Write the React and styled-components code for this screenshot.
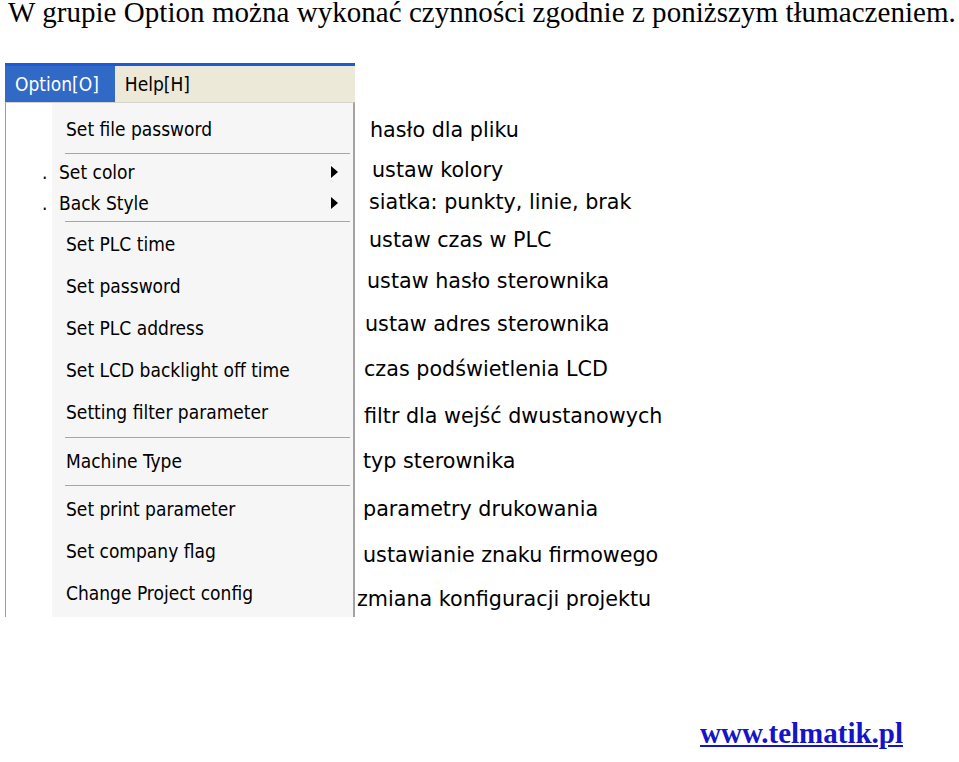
import React from "react";
import styled, { createGlobalStyle } from "styled-components";

const GlobalStyle = createGlobalStyle`
  html, body { margin: 0; padding: 0; background: #ffffff; }
  #root { width: 959px; }
`;

const Page = styled.div`
  width: 959px;
  height: 762px;
  display: flex;
  flex-direction: column;
  overflow: hidden;
  background: #ffffff;
`;

const Title = styled.h1`
  margin: 0;
  padding-left: 8px;
  font-family: "Liberation Serif", "Times New Roman", serif;
  font-weight: normal;
  font-size: 29px;
  line-height: 24px;
  letter-spacing: 0.04px;
  color: #000;
  white-space: nowrap;
`;

const Content = styled.div`
  display: flex;
  align-items: flex-start;
  margin-top: 39px;
  padding-left: 5px;
`;

const Menu = styled.div`
  width: 350px;
  display: flex;
  flex-direction: column;
  font-family: "DejaVu Sans Condensed", "DejaVu Sans", sans-serif;
  font-stretch: condensed;
  font-size: 19px;
  color: #000;
`;

const TopLine = styled.div`
  height: 3px;
  background: #1d5bd6;
`;

const MenuBar = styled.div`
  height: 36px;
  display: flex;
  align-items: stretch;
  background: #ece9d8;
`;

const MenuTitle = styled.div`
  display: flex;
  align-items: center;
  padding: 0 ${(p) => (p.$active ? 16 : 12)}px 0 10px;
  background: ${(p) => (p.$active ? "#3169c6" : "transparent")};
  color: ${(p) => (p.$active ? "#ffffff" : "#000")};
`;

const Panel = styled.div`
  display: flex;
  flex-direction: column;
  padding: 5px 0 3px;
  border-top: 1px solid #d6d3ca;
  border-left: 1px solid #9c9c9c;
  border-right: 2px solid #a3a3a3;
  background: linear-gradient(to right, #ffffff 46px, #f6f6f6 46px);
`;

const Item = styled.div`
  position: relative;
  height: ${(p) => (p.$sub ? 31 : 42)}px;
  display: flex;
  align-items: center;
  padding-left: ${(p) => (p.$sub ? 53 : 60)}px;
  white-space: nowrap;
`;

const Dot = styled.span`
  position: absolute;
  left: 36px;
`;

const Arrow = styled.svg`
  position: absolute;
  right: 14px;
  top: 50%;
  margin-top: -6px;
`;

const Separator = styled.div`
  padding: ${(p) => p.$above}px 3px ${(p) => p.$below}px 59px;
  &::after {
    content: "";
    display: block;
    height: 1px;
    background: #a9a69e;
  }
`;

const Translations = styled.ul`
  list-style: none;
  margin: 0;
  padding: 0;
  display: flex;
  flex-direction: column;
  font-family: "DejaVu Sans", sans-serif;
  font-size: 20.7px;
  line-height: 24px;
  color: #000;
`;

const Translation = styled.li`
  margin-top: ${(p) => p.$top}px;
  margin-left: ${(p) => p.$indent}px;
  white-space: nowrap;
`;

const Footer = styled.div`
  display: flex;
  justify-content: flex-end;
  margin-top: 104px;
  padding-right: 56px;
`;

const SiteLink = styled.a`
  font-family: "Liberation Serif", "Times New Roman", serif;
  font-weight: bold;
  font-size: 29px;
  line-height: 24px;
  color: #1414c8;
  text-decoration: underline;
`;

const SubArrow = () => (
  <Arrow width="8" height="12" viewBox="0 0 8 12">
    <path d="M0 0 L7 6 L0 12 Z" fill="#000" />
  </Arrow>
);

const translations = [
  { text: "hasło dla pliku", top: 55, indent: 15 },
  { text: "ustaw kolory", top: 16, indent: 17 },
  { text: "siatka: punkty, linie, brak", top: 8, indent: 14 },
  { text: "ustaw czas w PLC", top: 14, indent: 14 },
  { text: "ustaw hasło sterownika", top: 17, indent: 12 },
  { text: "ustaw adres sterownika", top: 19, indent: 10 },
  { text: "czas podświetlenia LCD", top: 21, indent: 9 },
  { text: "filtr dla wejść dwustanowych", top: 23, indent: 9 },
  { text: "typ sterownika", top: 21, indent: 8 },
  { text: "parametry drukowania", top: 24, indent: 8 },
  { text: "ustawianie znaku firmowego", top: 22, indent: 8 },
  { text: "zmiana konfiguracji projektu", top: 20, indent: 2 },
];

export default function App() {
  return (
    <Page>
      <GlobalStyle />
      <Title>
        W grupie Option można wykonać czynności zgodnie z poniższym
        tłumaczeniem.
      </Title>
      <Content>
        <Menu>
          <TopLine />
          <MenuBar>
            <MenuTitle $active>Option[O]</MenuTitle>
            <MenuTitle>Help[H]</MenuTitle>
          </MenuBar>
          <Panel>
            <Item>Set file password</Item>
            <Separator $above={3} $below={2} />
            <Item $sub>
              <Dot>.</Dot>Set color
              <SubArrow />
            </Item>
            <Item $sub>
              <Dot>.</Dot>Back Style
              <SubArrow />
            </Item>
            <Separator $above={3} $below={1} />
            <Item>Set PLC time</Item>
            <Item>Set password</Item>
            <Item>Set PLC address</Item>
            <Item>Set LCD backlight off time</Item>
            <Item>Setting filter parameter</Item>
            <Separator $above={4} $below={2} />
            <Item>Machine Type</Item>
            <Separator $above={3} $below={2} />
            <Item>Set print parameter</Item>
            <Item>Set company flag</Item>
            <Item>Change Project config</Item>
          </Panel>
        </Menu>
        <Translations>
          {translations.map((t) => (
            <Translation key={t.text} $top={t.top} $indent={t.indent}>
              {t.text}
            </Translation>
          ))}
        </Translations>
      </Content>
      <Footer>
        <SiteLink href="#">www.telmatik.pl</SiteLink>
      </Footer>
    </Page>
  );
}
